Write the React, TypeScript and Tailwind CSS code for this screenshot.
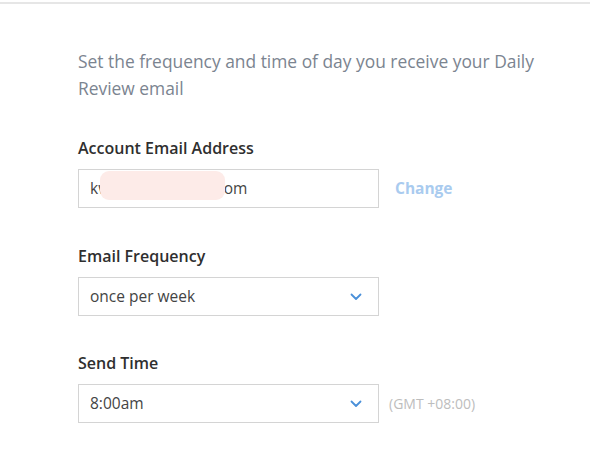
import React from 'react';

const Chevron = () => (
  <svg width="12" height="8" viewBox="0 0 12 8" fill="none" className="text-[#4a90d9]">
    <path d="M1.5 1.5 L6 6 L10.5 1.5" stroke="currentColor" strokeWidth="1.8" strokeLinecap="round" strokeLinejoin="round" />
  </svg>
);

const SelectBox = ({ value }: { value: string }) => (
  <div className="flex h-[39px] w-[301px] items-center justify-between border border-[#d4d4d4] bg-white pl-[11px] pr-[16px] text-[15.5px] text-[#444]">
    <span>{value}</span>
    <Chevron />
  </div>
);

export default function App() {
  return (
    <div className="h-[453px] w-[590px] bg-white font-['Open_Sans',sans-serif]">
      <div className="pt-[2px]">
        <div className="h-[2px] w-full bg-[#e6e6e6]" />
      </div>

      <div className="pl-[78px] pt-[44px]">
        <p className="text-[17.4px] leading-[27px] text-[#7b8490]">
          Set the frequency and time of day you receive your Daily
          <br />
          Review email
        </p>

        <div className="mt-[36px]">
          <h3 className="text-[16px] font-semibold leading-[20px] text-[#2f2f2f]">Account Email Address</h3>
          <div className="mt-[11px] flex items-center">
            <div className="relative flex h-[39px] w-[301px] items-center border border-[#d4d4d4] bg-white pl-[11px] text-[15.5px] text-[#444]">
              <span>kw</span>
              <span className="ml-[102px]">.com</span>
              <div className="absolute left-[21px] top-[1px] h-[29px] w-[125px] rounded-[9px] bg-[#fdebe8]" />
            </div>
            <span className="ml-[16px] text-[15.5px] font-bold text-[#a9cbef]">Change</span>
          </div>
        </div>

        <div className="mt-[38px]">
          <h3 className="text-[16px] font-semibold leading-[20px] text-[#2f2f2f]">Email Frequency</h3>
          <div className="mt-[11px]">
            <SelectBox value="once per week" />
          </div>
        </div>

        <div className="mt-[37px]">
          <h3 className="text-[16px] font-semibold leading-[20px] text-[#2f2f2f]">Send Time</h3>
          <div className="mt-[11px] flex items-center">
            <SelectBox value="8:00am" />
            <span className="ml-[10px] text-[14px] text-[#bdbdbd]">(GMT +08:00)</span>
          </div>
        </div>
      </div>
    </div>
  );
}
